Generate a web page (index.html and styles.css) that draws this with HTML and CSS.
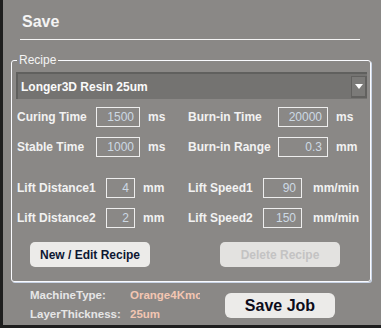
FILE: index.html
```html
<!DOCTYPE html>
<html>
<head>
<meta charset="utf-8">
<link rel="stylesheet" href="styles.css">
</head>
<body>
<div class="app">
  <h1 class="title">Save</h1>
  <div class="rule"></div>
  <fieldset class="group">
    <legend class="legend">Recipe</legend>
    <div class="combo">
      <span class="combo-text">Longer3D Resin 25um</span>
      <span class="combo-btn"><svg width="8" height="5" viewBox="0 0 8 5"><path d="M0 0H8L4 5Z" fill="#fff"/></svg></span>
    </div>
    <div class="rows">
      <div class="row">
        <div class="field left"><span class="label w79">Curing Time</span><span class="input w44">1500</span><span class="unit">ms</span></div>
        <div class="field"><span class="label w90">Burn-in Time</span><span class="input w50">20000</span><span class="unit">ms</span></div>
      </div>
      <div class="row">
        <div class="field left"><span class="label w79">Stable Time</span><span class="input w44">1000</span><span class="unit">ms</span></div>
        <div class="field"><span class="label w90">Burn-in Range</span><span class="input w50">0.3</span><span class="unit">mm</span></div>
      </div>
      <div class="row gap-top">
        <div class="field left"><span class="label w89">Lift Distance1</span><span class="input w29">4</span><span class="unit">mm</span></div>
        <div class="field"><span class="label w75">Lift Speed1</span><span class="input w39">90</span><span class="unit u10">mm/min</span></div>
      </div>
      <div class="row">
        <div class="field left"><span class="label w89">Lift Distance2</span><span class="input w29">2</span><span class="unit">mm</span></div>
        <div class="field"><span class="label w75">Lift Speed2</span><span class="input w39">150</span><span class="unit u10">mm/min</span></div>
      </div>
    </div>
    <div class="buttons">
      <button class="btn">New / Edit Recipe</button>
      <button class="btn disabled">Delete Recipe</button>
    </div>
  </fieldset>
  <div class="footer">
    <div class="info">
      <div class="info-row"><span class="info-label">MachineType:</span><span class="info-value">Orange4Kmono</span></div>
      <div class="info-row"><span class="info-label">LayerThickness:</span><span class="info-value">25um</span></div>
    </div>
    <button class="btn save">Save Job</button>
  </div>
</div>
</body>
</html>
```
FILE: styles.css
```css
html, body {
  margin: 0;
  padding: 0;
  background: #1e1e1e;
}
body {
  font-family: "Liberation Sans", Arial, sans-serif;
  width: 381px;
  height: 328px;
  overflow: hidden;
}
.app {
  margin-left: 3px;
  width: 378px;
  height: 325px;
  background: #8a8886;
  box-sizing: border-box;
  padding-top: 12px;
  color: #f2f2f2;
}
.title {
  margin: 0 0 0 19px;
  font-size: 16px;
  line-height: 20px;
  font-weight: bold;
  color: #f4f4f4;
}
.rule {
  margin: 7px 0 0 17px;
  width: 340px;
  height: 1px;
  background: #f4f4f4;
}
.group {
  margin: 13px 0 0 8px;
  width: 360px;
  box-sizing: border-box;
  border: 1px solid #fafbff;
  border-radius: 3px;
  box-shadow: 1px 1px 0 #c9d4e6;
  padding: 0 0 14px 0;
  min-width: 0;
}
.legend {
  margin-left: 5px;
  padding: 0 2px;
  font-size: 12px;
  line-height: 14px;
  color: #f4f4f4;
}
.combo {
  margin: 5px 3px 0 4px;
  height: 27px;
  box-sizing: border-box;
  background: #747371;
  border-top: 2px solid #60605e;
  border-left: 2px solid #60605e;
  display: flex;
  align-items: center;
  justify-content: space-between;
}
.combo-text {
  padding-left: 3px;
  font-size: 12px;
  font-weight: bold;
  color: #fafafa;
}
.combo-btn {
  width: 16px;
  height: 22px;
  box-sizing: border-box;
  background: #7b7a78;
  border: 1px solid #62615f;
  border-right-width: 2px;
  border-bottom-width: 2px;
  display: flex;
  align-items: center;
  justify-content: center;
  margin-right: 0;
}
.rows {
  margin-top: 8px;
  padding-left: 5px;
  display: flex;
  flex-direction: column;
  gap: 10px;
}
.row {
  display: flex;
  height: 20px;
}
.row.gap-top {
  margin-top: 11px;
}
.field {
  display: flex;
  align-items: center;
}
.field.left {
  width: 171px;
}
.label {
  font-size: 12px;
  font-weight: bold;
  color: #f2f2f2;
  white-space: nowrap;
}
.w79 { width: 79px; }
.w89 { width: 89px; }
.w90 { width: 90px; }
.w75 { width: 75px; }
.input {
  height: 20px;
  box-sizing: border-box;
  border: 1px solid #eeeeee;
  font-size: 12px;
  line-height: 18px;
  text-align: right;
  padding-right: 5px;
  color: #cdd9e4;
}
.w44 { width: 44px; }
.w50 { width: 50px; }
.w29 { width: 29px; }
.w39 { width: 39px; }
.unit {
  margin-left: 8px;
  font-size: 12px;
  font-weight: bold;
  color: #f2f2f2;
}
.unit.u10 { margin-left: 11px; }
.buttons {
  margin-top: 14px;
  display: flex;
  gap: 70px;
  padding-left: 18px;
}
.btn {
  width: 120px;
  height: 25px;
  border: none;
  border-radius: 5px;
  background: #ecebe9;
  font-family: "Liberation Sans", Arial, sans-serif;
  font-size: 12px;
  font-weight: bold;
  color: #0d1733;
  padding: 0;
}
.btn.disabled {
  background: #e3e2e0;
  color: #c3c3c3;
}
.footer {
  display: flex;
  align-items: flex-start;
  padding-left: 27px;
  margin-top: 3px;
}
.info {
  width: 195px;
}
.info-row {
  display: flex;
  height: 19px;
  align-items: center;
  font-size: 11.5px;
  font-weight: bold;
}
.info-label {
  width: 100px;
  color: #e6e6e6;
}
.info-value {
  width: 70px;
  overflow: hidden;
  white-space: nowrap;
  color: #f3c6b2;
}
.btn.save {
  margin-left: 0;
  margin-top: 8px;
  width: 110px;
  font-size: 16px;
  color: #0c0c1a;
  border-radius: 6px;
}
```
